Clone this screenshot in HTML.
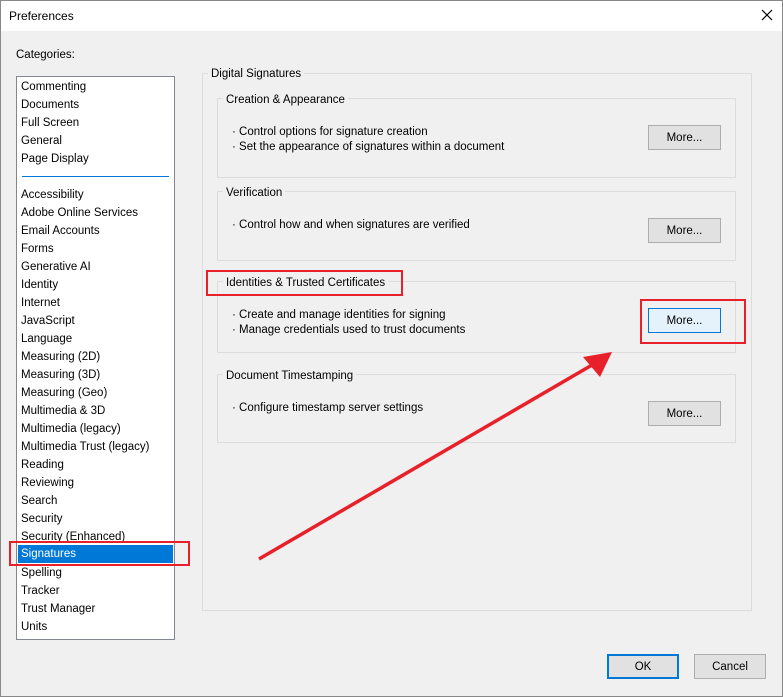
<!DOCTYPE html>
<html><head><style>
*{margin:0;padding:0;box-sizing:border-box}
body{width:783px;height:697px;background:#f0f0f0;font-family:"Liberation Sans",sans-serif;font-size:11.5px;color:#000;position:relative;overflow:hidden}
.abs{position:absolute}
.title{left:0;top:0;width:783px;height:31px;background:#fff}
.list{left:16px;top:76px;width:159px;height:564px;background:#fff;border:1px solid #828790}
.item{position:absolute;left:4px;height:18px;line-height:18px;white-space:nowrap}
.grp{border:1px solid #dcdcdc}
.lbl{position:absolute;background:#f0f0f0;padding:0 3px;line-height:14px}
.btn{position:absolute;width:73px;height:25px;background:#e1e1e1;border:1px solid #adadad;text-align:center;line-height:25px}
.red{position:absolute;border:2px solid #e8202a}
</style></head><body>
<div class="abs title"></div>
<div class="abs" style="left:0;top:0;width:783px;height:697px;border:1px solid #888"></div>
<div class="abs" style="left:9px;top:9px;font-size:12px">Preferences</div>
<svg class="abs" style="left:761px;top:9px" width="12" height="12"><path d="M1 1L11 11M11 1L1 11" stroke="#000" stroke-width="1.2"/></svg>
<div class="abs" style="left:16px;top:49px">Categories:</div>
<div class="abs list">
<div class="item" style="top:1px">Commenting</div>
<div class="item" style="top:19px">Documents</div>
<div class="item" style="top:37px">Full Screen</div>
<div class="item" style="top:55px">General</div>
<div class="item" style="top:73px">Page Display</div>
<div style="position:absolute;left:5px;top:99px;width:147px;height:1px;background:#0078d7"></div>
<div class="item" style="top:109px">Accessibility</div>
<div class="item" style="top:127px">Adobe Online Services</div>
<div class="item" style="top:145px">Email Accounts</div>
<div class="item" style="top:163px">Forms</div>
<div class="item" style="top:181px">Generative AI</div>
<div class="item" style="top:199px">Identity</div>
<div class="item" style="top:217px">Internet</div>
<div class="item" style="top:235px">JavaScript</div>
<div class="item" style="top:253px">Language</div>
<div class="item" style="top:271px">Measuring (2D)</div>
<div class="item" style="top:289px">Measuring (3D)</div>
<div class="item" style="top:307px">Measuring (Geo)</div>
<div class="item" style="top:325px">Multimedia &amp; 3D</div>
<div class="item" style="top:343px">Multimedia (legacy)</div>
<div class="item" style="top:361px">Multimedia Trust (legacy)</div>
<div class="item" style="top:379px">Reading</div>
<div class="item" style="top:397px">Reviewing</div>
<div class="item" style="top:415px">Search</div>
<div class="item" style="top:433px">Security</div>
<div class="item" style="top:451px">Security (Enhanced)</div>
<div style="position:absolute;left:1px;top:468px;width:155px;height:18px;background:#0078d7"></div>
<div class="item" style="top:468px;color:#fff">Signatures</div>
<div class="item" style="top:487px">Spelling</div>
<div class="item" style="top:505px">Tracker</div>
<div class="item" style="top:523px">Trust Manager</div>
<div class="item" style="top:541px">Units</div>
</div>
<div class="red" style="left:9px;top:541px;width:181px;height:25px"></div>

<div class="abs grp" style="left:202px;top:73px;width:550px;height:538px"></div>
<div class="lbl" style="left:208px;top:67px">Digital Signatures</div>

<div class="abs grp" style="left:217px;top:98px;width:519px;height:80px"></div>
<div class="lbl" style="left:223px;top:93px">Creation &amp; Appearance</div>
<div class="abs" style="left:232px;top:125px;line-height:15px">· Control options for signature creation<br>· Set the appearance of signatures within a document</div>
<div class="btn" style="left:648px;top:125px">More...</div>

<div class="abs grp" style="left:217px;top:191px;width:519px;height:70px"></div>
<div class="lbl" style="left:223px;top:186px">Verification</div>
<div class="abs" style="left:232px;top:218px;line-height:15px">· Control how and when signatures are verified</div>
<div class="btn" style="left:648px;top:218px">More...</div>

<div class="abs grp" style="left:217px;top:281px;width:519px;height:72px"></div>
<div class="lbl" style="left:223px;top:276px">Identities &amp; Trusted Certificates</div>
<div class="abs" style="left:232px;top:308px;line-height:15px">· Create and manage identities for signing<br>· Manage credentials used to trust documents</div>
<div class="btn" style="left:648px;top:308px;background:#e5f1fb;border-color:#0078d7">More...</div>
<div class="red" style="left:206px;top:270px;width:197px;height:26px"></div>
<div class="red" style="left:640px;top:299px;width:106px;height:45px"></div>

<div class="abs grp" style="left:217px;top:374px;width:519px;height:69px"></div>
<div class="lbl" style="left:223px;top:369px">Document Timestamping</div>
<div class="abs" style="left:232px;top:401px;line-height:15px">· Configure timestamp server settings</div>
<div class="btn" style="left:648px;top:401px">More...</div>

<svg class="abs" style="left:0;top:0" width="783" height="697">
<line x1="259" y1="559" x2="592" y2="365" stroke="#e8202a" stroke-width="3.5"/>
<polygon points="612,352 583,357 600,377" fill="#e8202a"/>
</svg>

<div class="btn" style="left:607px;top:654px;width:72px;height:25px;border:2px solid #0078d7;line-height:22px">OK</div>
<div class="btn" style="left:694px;top:654px;width:72px">Cancel</div>
</body></html>
